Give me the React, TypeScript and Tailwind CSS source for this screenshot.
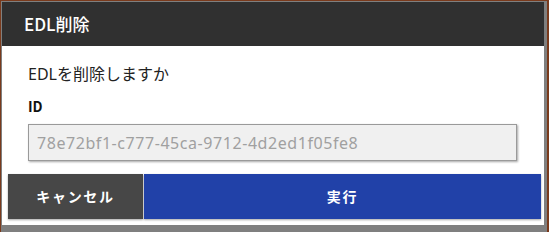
export default function App() {
  return (
    <div
      className="w-[549px] h-[232px] bg-[#7a3a1c] pl-[1px] pt-[1px] pr-[2px]"
      style={{ fontFamily: '"Noto Sans CJK JP", "Noto Sans", sans-serif' }}
    >
      <div className="w-full h-full bg-[#7f7f7f] pl-[1px] pt-[1px] pr-[3px] pb-[7px]">
        {/* Dialog */}
        <div className="w-full h-full bg-white flex flex-col">
          <div className="h-[44px] shrink-0 bg-[#303030] flex items-center pl-[22px]">
            <span className="text-[17px] text-white font-medium">EDL削除</span>
          </div>
          <div className="flex-1 flex flex-col pl-[26px] pr-[27px]">
            <p className="mt-[16px] text-[16px] leading-[24px] text-[#222] font-['Noto_Sans','Noto_Sans_CJK_JP',sans-serif]">
              EDLを削除しますか
            </p>
            <label className="mt-[10px] text-[14px] leading-[20px] font-bold text-[#111]">ID</label>
            <div className="mt-[8px] h-[37px] border border-[#9a9a9a] bg-[#f0f0f0] shadow-[1px_1px_2px_rgba(0,0,0,0.35)] flex items-center pl-[8px]">
              <span className="text-[16px] text-[#a0a0a0] tracking-[0.035em] font-['Noto_Sans',sans-serif]">
                78e72bf1-c777-45ca-9712-4d2ed1f05fe8
              </span>
            </div>
          </div>
          <div className="flex pl-[6px] pr-[3px] pb-[6px]">
            <button className="w-[135px] h-[45px] bg-[#474747] text-white text-[14px] font-bold tracking-[0.12em] shadow-[0_1px_2px_rgba(0,0,0,0.35)]">
              キャンセル
            </button>
            <button className="flex-1 ml-[1px] h-[45px] bg-[#2141a8] text-white text-[14px] font-bold tracking-[0.12em] shadow-[0_1px_2px_rgba(0,0,0,0.35)]">
              実行
            </button>
          </div>
        </div>
      </div>
    </div>
  );
}
